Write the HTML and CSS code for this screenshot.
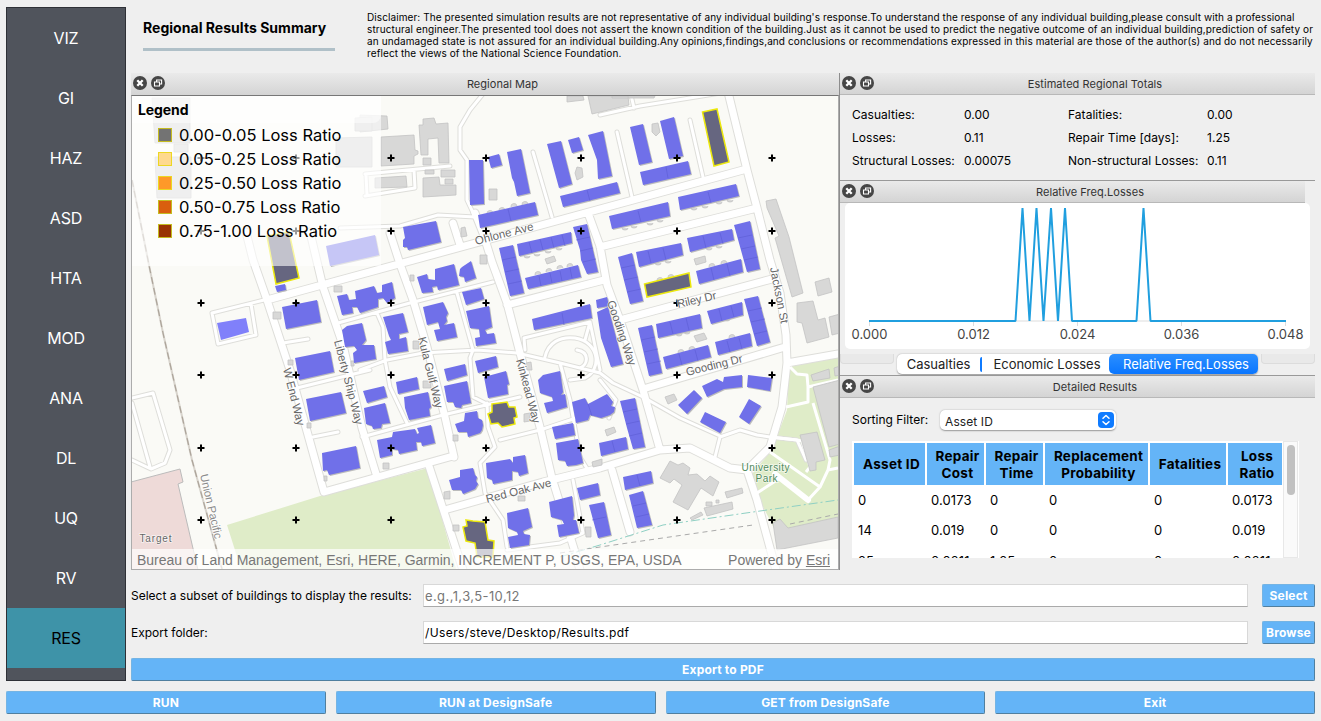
FILE: index.html
```html
<!DOCTYPE html>
<html lang="en">
<head>
<meta charset="utf-8">
<title>Regional Results Summary</title>
<link rel="stylesheet" href="styles.css">
</head>
<body>
<svg class="defs" width="0" height="0" aria-hidden="true">
  <symbol id="i-close" viewBox="0 0 14 14"><circle cx="7" cy="7" r="7" fill="#464646"/><path d="M4.3 4.3l5.4 5.4M9.7 4.3L4.3 9.7" stroke="#fff" stroke-width="2.3"/></symbol>
  <symbol id="i-float" viewBox="0 0 14 14"><circle cx="7" cy="7" r="7" fill="#464646"/><path d="M5.6 5.5V4h5v4H9M3.5 6h5v4h-5z" fill="none" stroke="#fff" stroke-width="1.1"/></symbol>
</svg>
<div class="app">
  <div class="top">
    <nav class="side">
      <a>VIZ</a><a>GI</a><a>HAZ</a><a>ASD</a><a>HTA</a><a>MOD</a><a>ANA</a><a>DL</a><a>UQ</a><a>RV</a><a class="on">RES</a>
    </nav>
    <main class="main">
      <header class="head">
        <h1>Regional Results Summary</h1>
        <p class="disc"><span class="d1">Disclaimer: The presented simulation results are not representative of any individual building's response.To understand the response of any individual building,please consult with a professional</span><span class="d2">structural engineer.The presented tool does not assert the known condition of the building.Just as it cannot be used to predict the negative outcome of an individual building,prediction of safety or</span><span class="d3">an undamaged state is not assured for an individual building.Any opinions,findings,and conclusions or recommendations expressed in this material are those of the author(s) and do not necessarily</span><span class="d4">reflect the views of the National Science Foundation.</span></p>
      </header>
      <div class="docks">
        <section class="mapdock">
          <div class="bar"><svg class="ic"><use href="#i-close"/></svg><svg class="ic"><use href="#i-float"/></svg><span>Regional Map</span></div>
          <div class="map">
<svg class="mapsvg" viewBox="132 96 706 473" width="706" height="473">
  <defs>
    <g id="wide">
      <path d="M267 300L743 170M246 232L253 260L267 300L290 370L315 460L324 492L453 456M310 232L323 287L343 345L362 428L377 477M390 233L400 264L413 300L427 347L445 417L454 457M453 223L460 245M475 213L483 233L492 262L507 303L520 353L540 427L552 478L575 552L580 570M588 213L600 246L607 285L620 320L643 390L660 450M600 247L757 208M507 305L604 280M620 320L772 279M643 389L785 347M787 363L838 354M728 92L747 170L757 208L770 260L780 293L786 335L787 363L782 407L770 447L747 470L757 500L776 570M448 509L543 482L600 468L660 450L690 448L730 468L747 470M429 466L463 570M612 470L630 532"/>
    </g>
    <g id="thin">
      <path d="M483 94L470 110L460 127L460 150L467 160L467 200L475 217L438 215L400 226L340 228M365 174L450 166M367 195L366 175M365 196L415 188L414 170M533 152L552 217M617 132L632 197M690 120L703 177M600 115L640 106L727 92M631 95L634 108M264 300L212 313L218 344L256 335L251 304M132 398L153 393L170 450L165 463L151 469L132 460M132 403L150 467M283 343L308 339M313 437L338 432M297 388L370 370M338 323L410 303L493 282M360 370L387 360L423 353L477 350L517 353L560 363L600 373L613 383L643 397L680 418L720 436M457 293L473 350L470 358L473 397L485 403M487 403L488 427L495 447L480 463L485 493L503 520L507 547M377 313L383 327L385 360L390 387L407 423M362 437L443 415L520 397M500 440L540 430L600 410M560 363L570 400L580 457L588 470M573 480L583 533L560 543L507 550M545 357C548 343 560 336 575 338C600 342 602 370 585 378L570 380M577 350C590 352 588 365 580 368M525 350L524 338L590 322L600 370M590 322L585 340M600 380L616 400L609 418M715 457L720 437L740 430L757 435L770 437L797 440L806 460"/>
    </g>
    <g id="park">
      <path d="M790 367L797 374L807 375L808 387L808 402L786 407M808 387L838 380M813 403L830 460L828 470L838 468M828 470L820 487L808 500L780 478L757 493M770 452L820 487M797 440L802 441L810 467L806 472M770 437L797 440"/>
    </g>
  </defs>
  <rect x="132" y="96" width="706" height="473" fill="#fafaf6"/>
  <path fill="#dfecc8" d="M227 525L320 496L428 468L456 569H241ZM789 367L838 357V530H775L757 495L752 474L772 450L787 410Z"/>
  <path fill="#eedad8" stroke="#bbb" d="M131 482L180 469L183 482L178 484L198 570H131Z"/>
  <use href="#wide" class="wc"/><use href="#thin" class="tc"/>
  <use href="#wide" class="wf"/><use href="#thin" class="tf"/>
  <use href="#park" class="pf"/>
  <path class="cul" d="M775 474L808 500"/>
  <path class="rail0" d="M132 180L150 270L163 333L192 460L222 569"/><path class="rail" d="M132 180L150 270L163 333L192 460L222 569"/>
  <path fill="none" stroke="#8fd0c4" stroke-dasharray="9 3 2 3" d="M560 557L600 545L663 525L753 512L838 500"/>
  <path fill="none" stroke="#aaa" stroke-dasharray="5 4" d="M560 553L600 547L753 525M790 524L838 514"/>
  <g class="gray">
    <path d="M381 137L414 135L415 150L418 151V154L414 156V164L381 166ZM419 125H423V119L434 118L436 124L448 123L449 163H439L438 138L428 139V155H421ZM375 178L406 176L407 187L375 188ZM423 178L439 177L440 185H456V195L423 197ZM441 170H455V177H441ZM423 158H431V165H423ZM425 170H434V174H425ZM445 179H453V184H445ZM489 189H497V200H489ZM567 96H583L584 100L567 102ZM588 96H628L629 105L592 114ZM360 115L387 116L388 129L360 132ZM612 96H655L654 98H612Z"/>
    <path d="M766 201L776 199L789 237L803 293L792 297L775 238L779 236L767 208ZM815 282L829 278L832 292L818 296ZM797 303L813 301L818 320L825 318L829 337L807 343L802 323L797 322ZM829 317L840 314V333L832 335ZM811 375L829 369L830 378L813 381ZM813 387L840 380V444L829 447ZM800 435L817 432L825 460L816 462V470L810 471ZM829 450L840 446V455L830 457ZM773 523L780 519L788 528L838 517V538L777 550ZM834 368L840 366V375L835 376Z"/>
    <path d="M670 461L678 465L683 463L690 468L688 475L697 474L705 481L710 476L719 482L713 496L701 488L688 510L673 502L682 485L674 479L670 483L660 478ZM725 492L742 488L743 493L727 498ZM704 508L732 502L733 509L707 516ZM690 518L701 512L703 515L692 520ZM706 502H712V506H706ZM716 500H719V503H716Z"/>
    <path d="M152 98H190V143H155ZM155 157H191V198H157ZM336 138L372 137V167H336ZM355 118L372 117V131H355ZM174 144H188V152H174Z"/>
    <path d="M577 167L582 168L583 177L577 180L575 173ZM652 124L658 123L660 132L656 136L652 132ZM694 259L705 256L706 262L696 265ZM545 259L554 256L556 261L547 264ZM694 336L704 333L707 339L697 342ZM665 397L674 394L677 400L668 404ZM273 312H281V319H273ZM334 286H342V292H334ZM288 360H293V365H288ZM351 361H354V366H351ZM410 275H414V281H410ZM413 341H419V349H413ZM423 381H431V388H423ZM480 255H487V264H480ZM461 228L465 227L467 236L461 237ZM383 463H389V469H383ZM453 435H458V441H453ZM524 414L530 413V421L524 422ZM526 363L531 362L532 370H527ZM444 492L450 491V499H444ZM453 525H459V531H453ZM518 496H525V501H518ZM585 527H591V537H586ZM592 462L602 459V465L593 467ZM605 430L614 427L616 432L607 436ZM307 423H311V428H307ZM324 476H327V481H324Z"/>
    <path d="M622 228a3 2 0 0 0 6 0M631 226a3 2 0 0 0 6 0M647 223a3 2 0 0 0 6 0M657 220a3 2 0 0 0 6 0M691 208a3 2 0 0 0 6 0M702 206a3 2 0 0 0 6 0M716 202a3 2 0 0 0 6 0M727 200a3 2 0 0 0 6 0M487 214a3 3 0 0 1 6 -1M499 211a3 3 0 0 1 6 -1M511 207a3 3 0 0 1 6 -1M522 205a3 3 0 0 1 6 -1M524 256a3 2 0 0 0 6 0M534 254a3 2 0 0 0 6 0M545 251a3 2 0 0 0 6 0M556 248a3 2 0 0 0 6 0M535 275a3 3 0 0 1 6 -1M546 272a3 3 0 0 1 6 -1M557 269a3 3 0 0 1 6 -1M567 267a3 3 0 0 1 6 -1M655 263a3 2 0 0 0 6 0M665 261a3 2 0 0 0 6 0M706 248a3 2 0 0 0 6 0M716 246a3 2 0 0 0 6 0M657 281a3 3 0 0 1 6 -1M668 278a3 3 0 0 1 6 -1M709 267a3 3 0 0 1 6 -1M721 264a3 3 0 0 1 6 -1M676 334a3 2 0 0 0 6 0M684 332a3 2 0 0 0 6 0M678 353a3 3 0 0 1 6 -1M689 350a3 3 0 0 1 6 -1M724 319a3 2 0 0 0 6 0M729 338a3 3 0 0 1 6 -1"/>
  </g>
  <g class="blue">
    <path d="M469 160H483L484 204L470 205ZM488 157L499 154L502 165L491 168ZM507 152L521 149L530 193L517 196L514 182L512 178ZM478 215L535 202L538 215L480 228ZM403 227L436 221L441 242L408 250L407 247L403 247V240L405 238ZM547 144L561 141L572 184L559 188ZM568 140L579 137L583 150L572 153ZM588 135L603 131L612 176L598 179L597 160ZM560 196L617 182L620 193L563 207ZM499 248L513 245L524 293L510 296ZM517 244L571 232L572 243L519 256ZM525 278L578 265L581 277L528 289ZM573 227L587 224L598 272L587 274L581 260L580 250Z"/>
    <path d="M630 127L643 124L652 162L639 165ZM660 121L674 117L683 156L669 159ZM640 172L688 161L691 174L643 185ZM609 216L668 202L670 216L612 229ZM678 197L736 184L739 196L680 210ZM636 252L681 243L683 255L639 267ZM687 238L732 229L734 240L690 252ZM734 225L750 221L760 269L747 272ZM696 271L741 259L743 272L699 284ZM618 257L632 253L643 301L630 304ZM638 328L652 325L662 373L649 376ZM656 324L700 314L702 328L658 338ZM707 311L742 302L743 315L711 324ZM744 299L758 296L770 342L757 346ZM715 342L750 333L752 346L718 355ZM663 357L708 345L711 357L666 369ZM596 300L607 297L609 306L597 308ZM597 312L608 307L623 364L611 367L601 338ZM532 319L590 304L592 318L534 330Z"/>
    <path d="M678 405L694 390L702 398L687 414ZM702 386L717 379L723 382L724 377L742 375V387L724 389L707 397ZM748 375L772 378L770 391L747 387ZM705 412L726 422L720 433L700 422ZM749 399L761 406L749 424L739 417ZM620 401L635 398L645 447L633 449L627 428ZM599 443L626 437L628 449L601 456ZM572 402L585 398L588 404L607 394L613 402L611 406L615 407L614 412L610 415L601 418L590 415L588 420L576 423ZM623 477L651 471L653 483L625 490ZM629 495L643 491L652 525L637 528ZM589 505L604 502L611 535L598 538Z"/>
    <path d="M363 391L384 386L387 397L367 403ZM364 408L385 403L390 423L382 424L381 428L373 429L372 426L366 424ZM396 382L417 377L419 389L398 394ZM404 397L428 392L431 407L429 409L430 416L409 420L405 408ZM444 369L465 364L467 375L447 381ZM444 386L467 381L471 403L462 405L461 408L455 407L453 402H447ZM475 361L496 356L498 367L478 373ZM484 377L506 371L509 384L507 385L508 394L488 398ZM455 424L464 421L465 413L477 411L478 418L482 420L483 425L482 430L480 433L468 437L467 432L458 432ZM377 440L392 437L393 432L415 429L417 434L419 433L417 428L431 425L435 443L422 446L421 442L416 442L417 450L399 454L398 450L392 449V455L380 458Z"/>
    <path d="M417 277L427 274L428 279L435 280V269L454 264L459 285L438 290L437 286L432 287L433 292L422 293ZM462 267L471 261L476 278L465 282L464 277L459 276L460 269ZM462 292L481 288L484 299L466 305ZM466 311L489 306L492 327L485 330L487 334L494 333L496 343L476 346L475 338L480 337L479 329L470 328ZM423 307L443 302L448 313L446 317L447 321L444 325L454 323L457 337L437 341L434 330L440 329L438 322L427 325ZM383 317L403 313L408 332L399 334V339L406 337L408 351L388 354L385 342L391 340L389 336ZM337 296L347 294L349 300L356 299L355 291L374 286L377 293L382 292V285L392 282L395 298L387 303L383 298L378 299V307L360 313L357 307L352 307L353 313L342 315ZM342 330L347 326L362 323L366 340L362 345L374 345L376 359L354 363L353 353L357 350L354 346L345 347Z"/>
    <path d="M282 307L317 300L321 322L286 329ZM295 358L330 351L334 372L299 380ZM306 399L341 392L346 413L310 421ZM322 453L356 446L360 468L329 475L327 470L323 471ZM275 286L285 284L286 290L277 292ZM326 246L375 235L379 255L330 266ZM449 480L460 477V470L473 468L475 475L477 477L476 481L478 484L475 489L463 494L461 490L452 490ZM486 463L510 459L513 463V457L525 455L528 473L519 476L518 472L512 471V480L493 484L492 480L487 478ZM507 513L528 508L532 527L523 531L524 534L530 535L529 545L510 548L508 537L518 535L517 532L508 528ZM549 502L572 496L574 515L573 520L576 520L579 533L559 537L557 525L564 524L562 520L551 517ZM577 488L598 483L600 495L580 500ZM552 427L573 423L575 435L555 439ZM556 443L578 439L583 463L576 465L567 466L565 461L558 460ZM538 380L543 375L560 371L563 392L561 395L565 394L567 407L547 413L544 403L553 401L552 397L540 393Z"/>
  </g>
  <path fill="#8080fa" d="M217 323L246 318L249 332L221 340Z"/>
  <path class="seams" d="M529 242l3 11M540 239l3 11M551 237l3 11M562 235l3 11M539 276l2 10M550 273l2 10M560 271l2 10M570 268l2 10M502 260l14-3M505 272l14-3M508 284l14-3M576 240l14-3M580 251l13-3M583 262l13-3M648 251l3 12M663 248l3 12M703 236l3 12M720 233l3 11M711 268l3 12M727 264l3 12M621 268l14-3M624 280l14-3M627 292l14-3M738 238l14-3M741 249l14-3M744 260l14-3M670 322l3 12M686 318l3 12M719 309l3 12M731 306l3 11M727 341l3 11M739 338l3 11M679 354l3 11M695 350l3 11M641 340l14-3M644 352l14-3M647 364l14-3M748 311l14-3M751 322l14-3M754 334l13-3M638 211l3 11M708 192l3 11M508 209l3 12M562 313l2 12M623 412l14-3M626 424l14-3M629 436l13-3M612 441l3 11M637 475l3 11M633 506l13-3M636 517l13-3M666 167l2 11M587 190l3 11M588 404l4 12M592 520l14-3"/>
  <path class="hot" d="M702.500 112L717 109L729 162L714 166ZM644.500 284L689 273L691 287L647 297ZM267 236L289 232L299 278L276 284ZM492 404L507 402L509 407L515 407L517 417L514 418L515 424L502 427L498 423L491 424L488 414L492 412ZM466 520L473 521L485 522L488 540L494 541L493 557L477 557L475 543L466 541L463 527L467 526Z"/>
  <path class="cross" d="M197.500 158h7m-3.500-3.500v7M292.500 158h7m-3.500-3.500v7M387.500 158h7m-3.500-3.500v7M482.500 158h7m-3.500-3.500v7M577.500 158h7m-3.500-3.500v7M673.500 158h7m-3.500-3.500v7M768.500 158h7m-3.500-3.500v7M197.500 231h7m-3.500-3.500v7M292.500 231h7m-3.500-3.500v7M387.500 231h7m-3.500-3.500v7M482.500 231h7m-3.500-3.500v7M577.500 231h7m-3.500-3.500v7M673.500 231h7m-3.500-3.500v7M768.500 231h7m-3.500-3.500v7M197.500 303h7m-3.500-3.500v7M292.500 303h7m-3.500-3.500v7M387.500 303h7m-3.500-3.500v7M482.500 303h7m-3.500-3.500v7M577.500 303h7m-3.500-3.500v7M673.500 303h7m-3.500-3.500v7M768.500 303h7m-3.500-3.500v7M197.500 375h7m-3.500-3.500v7M292.500 375h7m-3.500-3.500v7M387.500 375h7m-3.500-3.500v7M482.500 375h7m-3.500-3.500v7M577.500 375h7m-3.500-3.500v7M673.500 375h7m-3.500-3.500v7M768.500 375h7m-3.500-3.500v7M197.500 448h7m-3.500-3.500v7M292.500 448h7m-3.500-3.500v7M387.500 448h7m-3.500-3.500v7M482.500 448h7m-3.500-3.500v7M577.500 448h7m-3.500-3.500v7M673.500 448h7m-3.500-3.500v7M768.500 448h7m-3.500-3.500v7M197.500 520h7m-3.500-3.500v7M292.500 520h7m-3.500-3.500v7M387.500 520h7m-3.500-3.500v7M482.500 520h7m-3.500-3.500v7M577.500 520h7m-3.500-3.500v7M673.500 520h7m-3.500-3.500v7M768.500 520h7m-3.500-3.500v7"/>
  <g class="lbl">
    <text transform="translate(476 245) rotate(-14.500)" textLength="60">Ohlone Ave</text>
    <text transform="translate(678 308) rotate(-13)" textLength="40">Riley Dr</text>
    <text transform="translate(687 376) rotate(-14)" textLength="58">Gooding Dr</text>
    <text transform="translate(770 268) rotate(79)" textLength="57">Jackson St</text>
    <text transform="translate(607 302) rotate(71)" textLength="68">Gooding Way</text>
    <text transform="translate(283 369) rotate(76)" textLength="59">W End Way</text>
    <text transform="translate(334 341) rotate(75.500)" textLength="87">Liberty Ship Way</text>
    <text transform="translate(418 338) rotate(76)" textLength="73">Kula Gulf Way</text>
    <text transform="translate(516 360) rotate(75)" textLength="66">Kinkead Way</text>
    <text transform="translate(487 503) rotate(-14.500)" textLength="67">Red Oak Ave</text>
    <text transform="translate(200 475) rotate(77)" textLength="66" fill="#8a8a8a">Union Pacific</text>
    <text x="139.500" y="542" textLength="32" class="sm">Target</text>
    <text x="765.500" y="471" textLength="48" class="pk" text-anchor="middle">University</text>
    <text x="766.500" y="482" textLength="22" class="pk" text-anchor="middle">Park</text>
  </g>
</svg>
            <div class="legend">
              <div class="lt">Legend</div>
              <div class="li"><i class="c1"></i>0.00-0.05 Loss Ratio</div>
              <div class="li"><i class="c2"></i>0.05-0.25 Loss Ratio</div>
              <div class="li"><i class="c3"></i>0.25-0.50 Loss Ratio</div>
              <div class="li"><i class="c4"></i>0.50-0.75 Loss Ratio</div>
              <div class="li"><i class="c5"></i>0.75-1.00 Loss Ratio</div>
            </div>
            <div class="attr"><span>Bureau of Land Management, Esri, HERE, Garmin, INCREMENT P, USGS, EPA, USDA</span><span>Powered by <u>Esri</u></span></div>
          </div>
        </section>
        <div class="right">
          <section class="tot">
            <div class="bar"><svg class="ic"><use href="#i-close"/></svg><svg class="ic"><use href="#i-float"/></svg><span>Estimated Regional Totals</span></div>
            <div class="tg">
              <span>Casualties:</span><span>0.00</span><span>Fatalities:</span><span>0.00</span>
              <span>Losses:</span><span>0.11</span><span>Repair Time [days]:</span><span>1.25</span>
              <span>Structural Losses:</span><span>0.00075</span><span>Non-structural Losses:</span><span>0.11</span>
            </div>
          </section>
          <section class="freq">
            <div class="bar short"><svg class="ic"><use href="#i-close"/></svg><svg class="ic"><use href="#i-float"/></svg><span>Relative Freq.Losses</span></div>
            <div class="chart">
              <svg viewBox="845 203 465 146" width="465" height="146">
                <path stroke="#ddd" fill="none" d="M869 321H1286M869.500 321v5M973.500 321v5M1077.500 321v5M1181.500 321v5M1285.500 321v5"/>
                <path stroke="#209fdf" stroke-width="2" fill="none" stroke-linejoin="bevel" d="M869 321H1015.500L1022.500 208L1029.500 321L1036.500 208L1043.500 321L1051 208L1058 321L1065 208L1072 321H1136.500L1143.500 208L1150.500 321H1286"/>
                <g class="ax"><text x="869.500" y="339">0.000</text><text x="973.500" y="339">0.012</text><text x="1077.500" y="339">0.024</text><text x="1181.500" y="339">0.036</text><text x="1285.500" y="339">0.048</text></g>
              </svg>
            </div>
            <div class="tabs"><b class="edge l"></b><div class="tabset"><span class="t1">Casualties</span><i class="tsep"></i><span class="t2">Economic Losses</span><span class="t3">Relative Freq.Losses</span></div><b class="edge r"></b></div>
          </section>
          <section class="det">
            <div class="bar"><svg class="ic"><use href="#i-close"/></svg><svg class="ic"><use href="#i-float"/></svg><span>Detailed Results</span></div>
            <div class="sort"><span>Sorting Filter:</span><div class="sel"><span>Asset ID</span><svg width="16" height="16" viewBox="0 0 16 16"><rect width="16" height="16" rx="4" fill="#0f7bff"/><path d="M5 6.300L8 3.500L11 6.300M5 9.700L8 12.500L11 9.700" fill="none" stroke="#fff" stroke-width="1.500" stroke-linecap="round" stroke-linejoin="round"/></svg></div></div>
            <div class="tbl">
              <div class="grid">
                <b>Asset ID</b><b>Repair<br>Cost</b><b>Repair<br>Time</b><b>Replacement<br>Probability</b><b>Fatalities</b><b>Loss<br>Ratio</b>
                <span>0</span><span>0.0173</span><span>0</span><span>0</span><span>0</span><span>0.0173</span>
                <span>14</span><span>0.019</span><span>0</span><span>0</span><span>0</span><span>0.019</span>
                <span>25</span><span>0.0211</span><span>1.25</span><span>0</span><span>0</span><span>0.0211</span>
              </div>
              <div class="track"><i></i></div>
            </div>
          </section>
        </div>
      </div>
      <div class="form">
        <label>Select a subset of buildings to display the results:</label><div class="inp ph">e.g.,1,3,5-10,12</div><div class="btn">Select</div>
        <label>Export folder:</label><div class="inp">/Users/steve/Desktop/Results.pdf</div><div class="btn">Browse</div>
        <div class="btn full">Export to PDF</div>
      </div>
    </main>
  </div>
  <footer class="foot"><div class="btn">RUN</div><div class="btn">RUN at DesignSafe</div><div class="btn">GET from DesignSafe</div><div class="btn">Exit</div></footer>
</div>
</body>
</html>
```
FILE: styles.css
```css
* { box-sizing: border-box; }
body { margin: 0; background: #efefef; color: #111; font: 12px Inter, "Liberation Sans", sans-serif; }
.defs { display: block; height: 0; }
.app { width: 1321px; height: 721px; padding: 7px 6px; overflow: hidden; }
.top { display: flex; gap: 5px; height: 674px; }
.side { width: 120px; background: #50545c; border: 1px solid #2e3036; display: flex; flex-direction: column; }
.side a { height: 60px; line-height: 61px; text-align: center; color: #fff; font-size: 16px; letter-spacing: -0.2px; }
.side .on { background: #3e93a8; color: #000; }
.main { width: 1184px; }
.head { height: 66px; display: flex; padding-left: 12px; }
h1 { width: 192px; height: 44px; margin: 0 32px 0 0; border-bottom: 3px solid #b0c0c8; font-size: 14px; line-height: 42px; white-space: nowrap; letter-spacing: 0.03px; color: #000; }
.disc { margin: 4px 0 0; font-size: 10px; line-height: 12px; color: #000; }
.disc span { display: block; white-space: nowrap; }
.d1 { letter-spacing: 0.091px; }
.d2 { letter-spacing: 0.12px; }
.d3 { letter-spacing: 0.105px; }
.d4 { letter-spacing: 0.1px; }
.docks { display: flex; height: 497px; }
.mapdock { width: 709px; border-right: 1px solid #8d8d8d; }
.bar { height: 22px; display: flex; align-items: center; gap: 4px; padding: 0 3px 2px 2px; background: linear-gradient(#eaeaea, #d4d4d4); color: #333; font-size: 11px; letter-spacing: 0.05px; }
.bar span { flex: 1; text-align: center; padding-top: 3px; }
.mapdock .bar span { padding-top: 2px; }
.ic { width: 14px; height: 14px; flex: none; }
.map { height: 475px; width: 708px; border: 1px solid #acacac; border-top-color: #777; position: relative; overflow: hidden; }
.mapsvg { display: block; }
.wc, .tc, .wf, .tf, .pf, .cul { fill: none; stroke-linejoin: round; }
.wc { stroke: #dededa; stroke-width: 9px; stroke-linecap: round; }
.tc { stroke: #dededa; stroke-width: 5px; stroke-linecap: round; }
.wf { stroke: #fff; stroke-width: 7px; stroke-linecap: round; }
.tf { stroke: #fff; stroke-width: 3px; stroke-linecap: round; }
.pf { stroke: #fff; stroke-width: 3px; }
.cul { stroke: #fff; stroke-width: 6px; stroke-linecap: round; }
.rail0 { fill: none; stroke: #d8d4cd; stroke-width: 2px; }
.rail { fill: none; stroke: #aca49a; stroke-width: 1.2px; stroke-dasharray: 7 4; }
.gray { fill: #d8d8d7; stroke: #c3c3c3; stroke-width: 0.8px; }
.blue { fill: #7070e9; filter: drop-shadow(1.5px 1.5px 0.5px #bbb); }
.seams { fill: none; stroke: #5c5cd4; stroke-width: 0.6px; }
.hot { fill: #666680; stroke: #ece80c; stroke-width: 1.5px; }
.cross { fill: none; stroke: #000; stroke-width: 2px; }
.lbl { font: 11.5px "Liberation Sans", sans-serif; fill: #666; stroke: #fff; stroke-width: 1.5px; stroke-opacity: 0.7; paint-order: stroke; }
.lbl .sm { font-size: 10px; }
.lbl .pk { font-size: 10px; fill: #4f8a5b; }
.legend { position: absolute; left: 0; top: 0; width: 249px; height: 170px; background: rgba(255,255,255,0.6); font-size: 16.5px; color: #000; }
.lt { height: 27px; padding: 0 6px; line-height: 28px; font-size: 14px; letter-spacing: -0.1px; font-weight: 700; background: rgba(255,255,255,0.5); border-radius: 0 0 8px 0; }
.li { height: 24px; display: flex; align-items: center; padding-left: 26px; gap: 7px; white-space: nowrap; }
.li i { width: 14px; height: 14px; border: 1px solid #c4bb20; }
.li .c2, .li .c3 { border-color: #ecd722; }
.c1 { background: #737373; }
.c2 { background: #fed98e; }
.c3 { background: #fe9929; }
.c4 { background: #d95f0e; }
.c5 { background: #993404; }
.attr { position: absolute; left: 0; right: 0; bottom: 0; height: 20px; padding: 0 8px 0 5px; display: flex; justify-content: space-between; font: 14px/23px "Liberation Sans", sans-serif; color: #777; background: rgba(255,255,255,0.7); white-space: nowrap; }
.right { width: 475px; }
.right .bar { border-bottom: 1px solid #b8b8b8; }
.tot { height: 108px; border-bottom: 1px solid #999; }
.tg { display: grid; grid-template-columns: 112px 104px 139px 1fr; grid-auto-rows: 23px; align-items: center; padding: 8px 0 0 12px; color: #000; white-space: nowrap; letter-spacing: 0.04px; }
.freq { height: 195px; border-bottom: 1px solid #999; }
.short { width: 465px; }
.chart { margin: 0 5px; width: 465px; height: 146px; background: #fff; border-radius: 5px; overflow: hidden; }
.chart svg { display: block; }
.ax { font: 13px Inter, sans-serif; fill: #444; text-anchor: middle; }
.tabs { display: flex; padding-top: 5px; gap: 3px; }
.edge { height: 10px; background: #e9e9e9; border: 1px solid #dcdcdc; border-top: 0; border-radius: 0 0 4px 4px; }
.l { width: 54px; }
.r { flex: 1; }
.tabset { display: flex; align-items: center; width: 361px; height: 20px; background: #fff; border-radius: 5px; box-shadow: 0 0.5px 1.5px #999; font-size: 13px; letter-spacing: -0.03px; line-height: 21px; white-space: nowrap; color: #222; }
.tabset span { text-align: center; }
.t1 { width: 83px; }
.tsep { width: 2px; height: 15px; background: #0f7bff; border-radius: 2px 0 0 2px; }
.t2 { width: 127px; padding-left: 3px; }
.t3 { width: 149px; height: 20px; background: linear-gradient(#2b8fff, #0a76ff); color: #fff; border-radius: 5px; padding-left: 5px; }
.sort { display: flex; align-items: center; height: 43px; padding-left: 12px; color: #000; }
.sort > span { width: 88px; }
.sel { width: 176px; height: 20px; border-radius: 5px; background: #fff; box-shadow: 0 0.5px 1.5px #999; display: flex; align-items: center; justify-content: space-between; padding: 0 2px 0 5px; color: #222; letter-spacing: 0.1px; }
.sel span { padding-top: 3px; }
.tbl { display: flex; margin-left: 12px; width: 447px; height: 117px; overflow: hidden; background: #fff; }
.grid { display: grid; grid-template-columns: 71px 57px 57px 103px 76px 54px; column-gap: 2px; grid-template-rows: 42px 30px 31px 30px; padding: 2px 0 0 2px; color: #000; font-size: 13px; }
.grid b { background: #64b4f7; display: flex; align-items: center; justify-content: center; text-align: center; line-height: 17px; padding: 1px 0 0 4px; font-size: 13.5px; letter-spacing: 0.25px; white-space: nowrap; }
.grid span { line-height: 31px; padding-left: 4px; letter-spacing: 0.1px; }
.track { width: 15px; margin-left: 1px; border: 1px solid #e8e8e8; background: #fafafa; padding: 3px 0 0 3px; }
.track i { display: block; width: 8px; height: 50px; border-radius: 4px; background: #c1c1c1; }
.form { display: grid; grid-template-columns: 292px 839px 53px; grid-template-rows: 23px 23px 23px; row-gap: 14px; padding-top: 14px; align-items: center; color: #000; }
.form label { white-space: nowrap; }
.inp { width: 825px; height: 23px; background: #fff; border: 1px solid #d8d8d8; border-bottom-color: #aaa; padding-left: 1px; line-height: 22px; letter-spacing: 0.4px; }
.ph { color: #777; font-size: 13px; letter-spacing: 0.4px; }
.btn { height: 23px; line-height: 22px; text-align: center; background: #64b4f7; border: 1px solid #74b4e4; border-right-color: #507f9f; border-bottom-color: #507f9f; border-radius: 2px; color: #fff; font-weight: 700; letter-spacing: 0.18px; }
.full { grid-column: 1 / -1; }
.foot { display: grid; grid-template-columns: repeat(4, 1fr); gap: 10px; padding-top: 10px; }
```
